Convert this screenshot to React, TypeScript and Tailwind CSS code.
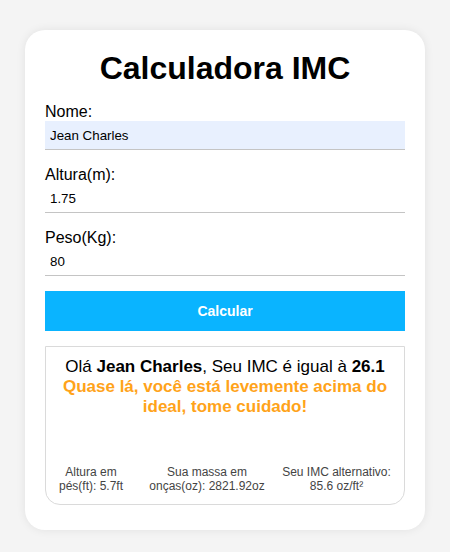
import React from "react";

export default function App() {
  return (
    <div
      className="min-h-[552px] w-[450px] bg-[#f4f4f4] pt-[30px]"
      style={{ fontFamily: '"Liberation Sans", Arial, sans-serif' }}
    >
      <div className="mx-[25px] w-[400px] rounded-[20px] bg-white px-[20px] pt-[20px] pb-[25px] shadow-[0_0_10px_rgba(0,0,0,0.08)]">
        <h1 className="m-0 text-center text-[32px] font-bold leading-[37px] text-black">
          Calculadora IMC
        </h1>
        <div className="mt-[15px] flex flex-col">
          <label className="text-[16px] leading-[19px] text-black">Nome:</label>
          <input
            readOnly
            value="Jean Charles"
            className="h-[29px] w-full border-b border-[#c4c4c4] bg-[#e8f0fe] px-[5px] text-[13.333px] text-black outline-none"
          />
        </div>
        <div className="mt-[15px] flex flex-col">
          <label className="text-[16px] leading-[19px] text-black">Altura(m):</label>
          <input
            readOnly
            value="1.75"
            className="h-[29px] w-full border-b border-[#c4c4c4] bg-white px-[5px] text-[13.333px] text-black outline-none"
          />
        </div>
        <div className="mt-[15px] flex flex-col">
          <label className="text-[16px] leading-[19px] text-black">Peso(Kg):</label>
          <input
            readOnly
            value="80"
            className="h-[29px] w-full border-b border-[#c4c4c4] bg-white px-[5px] text-[13.333px] text-black outline-none"
          />
        </div>
        <button className="mt-[15px] flex h-[40px] w-full items-center justify-center bg-[#0ab4ff] text-[14px] font-bold text-white">
          Calcular
        </button>
        <div className="mt-[15px] flex h-[159px] flex-col rounded-b-[15px] border border-[#dadada] px-0 pt-[10px] pb-[11px] text-center">
          <p className="whitespace-nowrap text-[17px] leading-[20px] text-black">
            Olá <b>Jean Charles</b>, Seu IMC é igual à <b>26.1</b>
          </p>
          <p className="mx-auto w-[340px] text-[17px] font-bold leading-[20px] text-[#ffa31a]">
            Quase lá, você está levemente acima do ideal, tome cuidado!
          </p>
          <div className="mt-auto flex px-[10px] text-[12px] leading-[14px] text-[#444]">
            <div className="w-[70px]">Altura em pés(ft): 5.7ft</div>
            <div className="ml-[17px] w-[128px]">Sua massa em onças(oz): 2821.92oz</div>
            <div className="ml-[8px] w-[115px]">Seu IMC alternativo: 85.6 oz/ft²</div>
          </div>
        </div>
      </div>
    </div>
  );
}
